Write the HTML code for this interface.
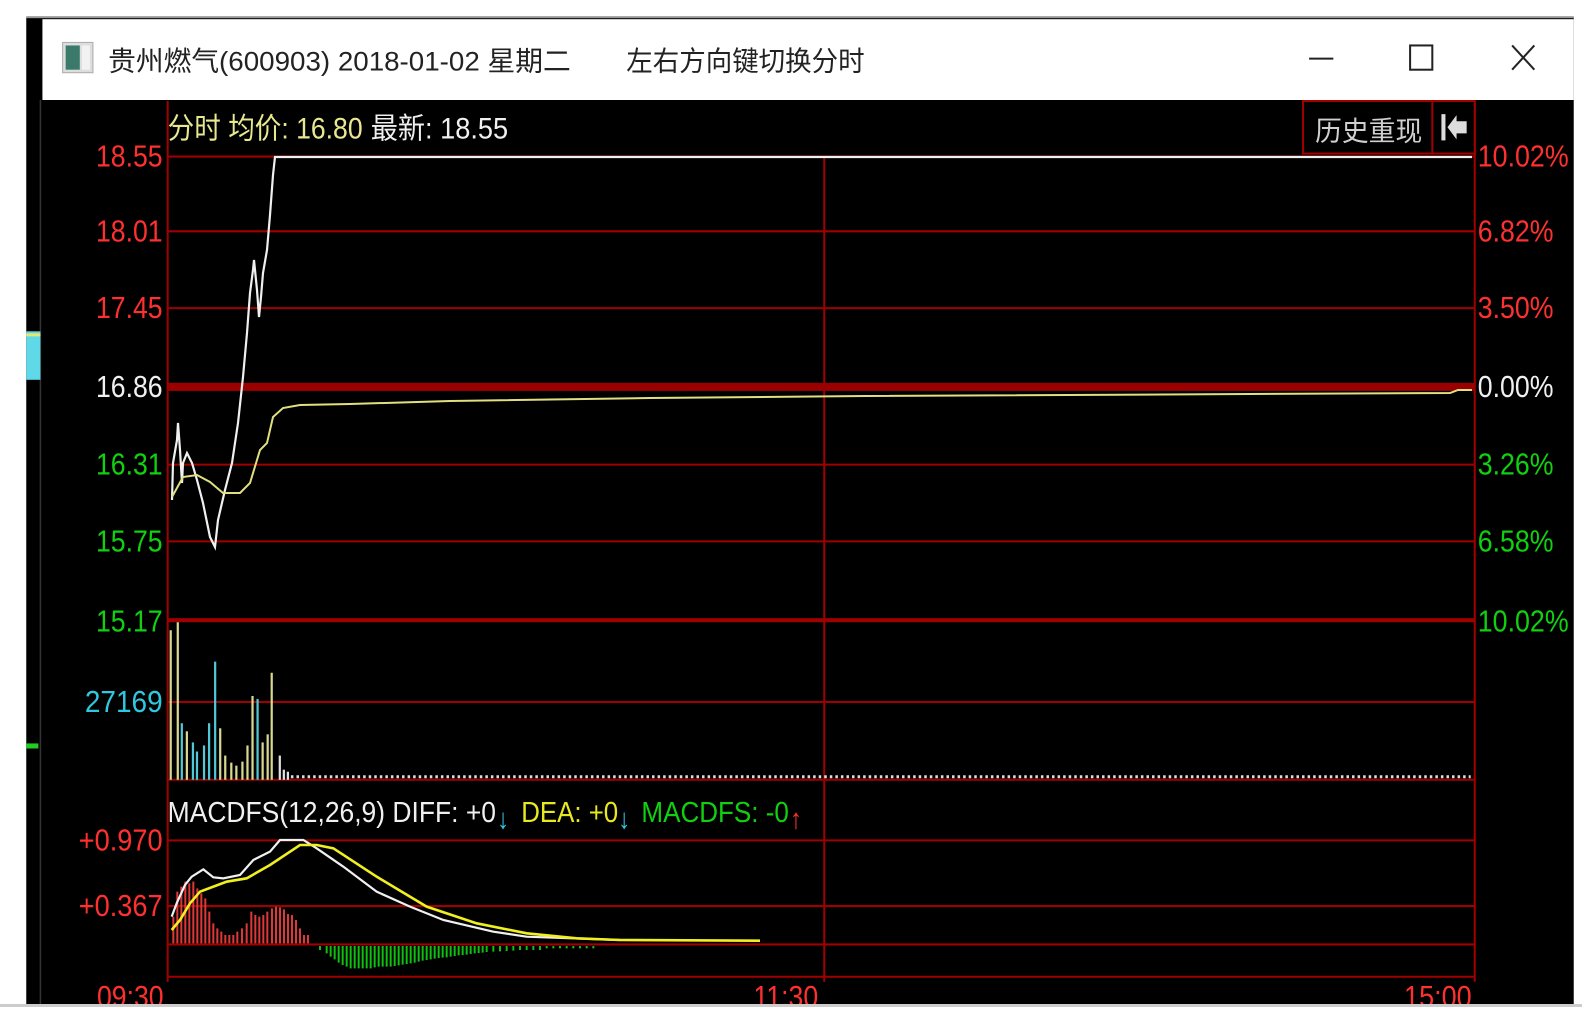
<!DOCTYPE html>
<html><head><meta charset="utf-8"><style>
html,body{margin:0;padding:0;background:#fff;width:1582px;height:1023px;overflow:hidden}
svg{display:block}
text{font-family:"Liberation Sans","Noto Sans CJK SC",sans-serif}
</style></head><body>
<svg width="1582" height="1023" viewBox="0 0 1582 1023" xmlns="http://www.w3.org/2000/svg">
<rect width="1582" height="1023" fill="#fff"/>
<g transform="scale(1.0101)">
 <rect x="26" y="17" width="1532" height="980" fill="#000"/>
 <rect x="26" y="16" width="1532" height="2" fill="#999"/>
 <rect x="42" y="19" width="1516" height="80" fill="#fff"/>
 <line x1="40" y1="99" x2="40" y2="997" stroke="#333" stroke-width="1.5"/>
 <rect x="26" y="328" width="14" height="48" fill="#5fd8e8"/>
 <rect x="26" y="330" width="14" height="3" fill="#e8e870"/>
 <rect x="26" y="736" width="12" height="5" fill="#2c2"/>
 <rect x="62" y="42" width="30" height="30" fill="#ddd" stroke="#aaa"/>
 <rect x="65" y="45" width="14" height="24" fill="#3b7a6a"/>
 <rect x="81" y="45" width="8" height="24" fill="#f2f2f2"/>
 <text x="107" y="70" font-size="27" fill="#222" textLength="458" lengthAdjust="spacingAndGlyphs">贵州燃气(600903) 2018-01-02 星期二</text>
 <text x="620" y="70" font-size="27" fill="#222" textLength="236" lengthAdjust="spacingAndGlyphs">左右方向键切换分时</text>
 <line x1="1296" y1="58" x2="1320" y2="58" stroke="#222" stroke-width="2"/>
 <rect x="1396" y="45" width="22" height="24" fill="none" stroke="#222" stroke-width="2"/>
 <path d="M1497 45 L1519 69 M1519 45 L1497 69" stroke="#222" stroke-width="2"/>

 <g stroke="#a00000" stroke-width="2">
  <line x1="166" y1="155" x2="1460" y2="155"/>
  <line x1="166" y1="229" x2="1460" y2="229"/>
  <line x1="166" y1="305" x2="1460" y2="305"/>
  <line x1="166" y1="460" x2="1460" y2="460"/>
  <line x1="166" y1="536" x2="1460" y2="536"/>
  <line x1="166" y1="695" x2="1460" y2="695"/>
  <line x1="166" y1="772" x2="1460" y2="772"/>
  <line x1="166" y1="832" x2="1460" y2="832"/>
  <line x1="166" y1="897" x2="1460" y2="897"/>
  <line x1="166" y1="935" x2="1460" y2="935"/>
  <line x1="166" y1="967" x2="1460" y2="967"/>
  <line x1="166" y1="100" x2="166" y2="972"/>
  <line x1="1460" y1="100" x2="1460" y2="972"/>
  <line x1="816" y1="155" x2="816" y2="972"/>
 </g>
 <rect x="166" y="379" width="1294" height="8" fill="#9a0000"/>
 <rect x="166" y="612" width="1294" height="4" fill="#a00000"/>
 <rect x="1290" y="100" width="170" height="52" fill="#000" stroke="#a00000" stroke-width="2"/>
 <line x1="1418" y1="100" x2="1418" y2="152" stroke="#a00000" stroke-width="2"/>
 <text x="1302" y="139" font-size="27" fill="#d0d0d0" textLength="106" lengthAdjust="spacingAndGlyphs">历史重现</text>
 <rect x="1427" y="113" width="4" height="26" fill="#ddd"/>
 <polygon points="1433,126 1442,114 1442,120 1452,120 1452,132 1442,132 1442,138" fill="#ddd"/>

 <text x="166" y="137" font-size="29" fill="#e8e890" textLength="193" lengthAdjust="spacingAndGlyphs">分时 均价: 16.80</text>
 <text x="367" y="137" font-size="29" fill="#f0f0f0" textLength="136" lengthAdjust="spacingAndGlyphs">最新: 18.55</text>

 <g font-size="30">
  <text x="95" y="165" fill="#ff3030" textLength="66" lengthAdjust="spacingAndGlyphs">18.55</text>
  <text x="95" y="239" fill="#ff3030" textLength="66" lengthAdjust="spacingAndGlyphs">18.01</text>
  <text x="95" y="315" fill="#ff3030" textLength="66" lengthAdjust="spacingAndGlyphs">17.45</text>
  <text x="95" y="393" fill="#f0f0f0" textLength="66" lengthAdjust="spacingAndGlyphs">16.86</text>
  <text x="95" y="470" fill="#10d010" textLength="66" lengthAdjust="spacingAndGlyphs">16.31</text>
  <text x="95" y="546" fill="#10d010" textLength="66" lengthAdjust="spacingAndGlyphs">15.75</text>
  <text x="95" y="625" fill="#10d010" textLength="66" lengthAdjust="spacingAndGlyphs">15.17</text>
  <text x="84" y="705" fill="#30c8e0" textLength="77" lengthAdjust="spacingAndGlyphs">27169</text>
  <text x="78" y="842" fill="#ff3030" textLength="83" lengthAdjust="spacingAndGlyphs">+0.970</text>
  <text x="78" y="907" fill="#ff3030" textLength="83" lengthAdjust="spacingAndGlyphs">+0.367</text>
 </g>
 <g font-size="30">
  <text x="1463" y="165" fill="#ff3030" textLength="90" lengthAdjust="spacingAndGlyphs">10.02%</text>
  <text x="1463" y="239" fill="#ff3030" textLength="75" lengthAdjust="spacingAndGlyphs">6.82%</text>
  <text x="1463" y="315" fill="#ff3030" textLength="75" lengthAdjust="spacingAndGlyphs">3.50%</text>
  <text x="1463" y="393" fill="#f0f0f0" textLength="75" lengthAdjust="spacingAndGlyphs">0.00%</text>
  <text x="1463" y="470" fill="#10d010" textLength="75" lengthAdjust="spacingAndGlyphs">3.26%</text>
  <text x="1463" y="546" fill="#10d010" textLength="75" lengthAdjust="spacingAndGlyphs">6.58%</text>
  <text x="1463" y="625" fill="#10d010" textLength="90" lengthAdjust="spacingAndGlyphs">10.02%</text>
 </g>
 <g font-size="30" fill="#ff3030">
  <text x="96" y="997" textLength="66" lengthAdjust="spacingAndGlyphs">09:30</text>
  <text x="746" y="997" textLength="64" lengthAdjust="spacingAndGlyphs">11:30</text>
  <text x="1390" y="997" textLength="67" lengthAdjust="spacingAndGlyphs">15:00</text>
 </g>
 <text x="166" y="814" font-size="28" fill="#f0f0f0" textLength="325" lengthAdjust="spacingAndGlyphs">MACDFS(12,26,9) DIFF: +0</text>
 <text x="492" y="820" font-size="28" fill="#30c8e0" textLength="12" lengthAdjust="spacingAndGlyphs">↓</text>
 <text x="516" y="814" font-size="28" fill="#e8e820" textLength="96" lengthAdjust="spacingAndGlyphs">DEA: +0</text>
 <text x="612" y="820" font-size="28" fill="#30c8e0" textLength="12" lengthAdjust="spacingAndGlyphs">↓</text>
 <text x="635" y="814" font-size="28" fill="#10d010" textLength="146" lengthAdjust="spacingAndGlyphs">MACDFS: -0</text>
 <text x="782" y="820" font-size="28" fill="#ff3030" textLength="12" lengthAdjust="spacingAndGlyphs">↑</text>

 <g stroke-width="2.2">
  <line x1="169" y1="772" x2="169" y2="624" stroke="#d8d890"/>
  <line x1="176" y1="772" x2="176" y2="616" stroke="#d8d890"/>
  <line x1="180" y1="772" x2="180" y2="716" stroke="#50c8d8"/>
  <line x1="185" y1="772" x2="185" y2="724" stroke="#d8d890"/>
  <line x1="191" y1="772" x2="191" y2="735" stroke="#50c8d8"/>
  <line x1="195" y1="772" x2="195" y2="744" stroke="#50c8d8"/>
  <line x1="202" y1="772" x2="202" y2="738" stroke="#50c8d8"/>
  <line x1="207" y1="772" x2="207" y2="716" stroke="#50c8d8"/>
  <line x1="213" y1="772" x2="213" y2="655" stroke="#50c8d8"/>
  <line x1="218" y1="772" x2="218" y2="721" stroke="#d8d890"/>
  <line x1="223" y1="772" x2="223" y2="748" stroke="#d8d890"/>
  <line x1="229" y1="772" x2="229" y2="755" stroke="#d8d890"/>
  <line x1="234" y1="772" x2="234" y2="758" stroke="#d8d890"/>
  <line x1="240" y1="772" x2="240" y2="754" stroke="#d8d890"/>
  <line x1="245" y1="772" x2="245" y2="738" stroke="#d8d890"/>
  <line x1="250" y1="772" x2="250" y2="689" stroke="#d8d890"/>
  <line x1="255" y1="772" x2="255" y2="692" stroke="#50c8d8"/>
  <line x1="260" y1="772" x2="260" y2="735" stroke="#d8d890"/>
  <line x1="265" y1="772" x2="265" y2="727" stroke="#d8d890"/>
  <line x1="269" y1="772" x2="269" y2="666" stroke="#d8d890"/>
  <line x1="277" y1="772" x2="277" y2="748" stroke="#e0e0e0"/>
  <line x1="281" y1="772" x2="281" y2="762" stroke="#e0e0e0"/>
  <line x1="285" y1="772" x2="285" y2="764" stroke="#e0e0e0"/>
 </g>
 <line x1="288" y1="769" x2="1456" y2="769" stroke="#ddd" stroke-width="3" stroke-dasharray="2.5,3"/>
</g>

<polyline fill="none" stroke="#f0f0f0" stroke-width="2.2" points="1290,157 1472,157"/>
<polyline fill="none" stroke="#f0f0f0" stroke-width="2.2" points="172,500 173,463 177,440 178,423 180,450 182,483 183,463 187,453 192,463 197,480 203,503 210,537 215,547 218,520 225,490 232,463 238,423 243,377 247,333 250,293 253,270 254,260 257,290 259,317 261,297 263,273 267,250 270,215 273,175 275,157 1290,157"/>
<polyline fill="none" stroke="#e0e080" stroke-width="2" points="172,497 183,477 197,475 210,482 223,493 240,493 250,483 260,450 267,443 273,417 283,408 300,405 350,404 450,401 650,398 865,396 1450,393 1458,390 1472,390"/>

<g transform="translate(160,820) scale(0.33333)">
 <path stroke="#e03838" stroke-width="2" vector-effect="non-scaling-stroke" d="M40 370V290M52 370V215M64 370V200M76 370V185M88 370V190M100 370V185M112 370V205M124 370V220M136 370V235M148 370V275M160 370V310M172 370V325M184 370V335M196 370V345M208 370V345M220 370V345M232 370V335M246 370V325M260 370V310M274 370V275M286 370V285M298 370V290M310 370V285M322 370V275M336 370V265M348 370V260M360 370V262M372 370V268M384 370V282M396 370V285M408 370V300M420 370V325M432 370V345M444 370V345"/>
 <path stroke="#10c010" stroke-width="2" vector-effect="non-scaling-stroke" d="M480 378V390M500 378V400M512 378V410M524 378V418M536 378V428M548 378V435M560 378V440M572 378V445M584 378V445M596 378V445M608 378V445M620 378V445M632 378V445M644 378V442M656 378V440M668 378V440M680 378V440M692 378V440M704 378V438M716 378V436M728 378V434M740 378V432M752 378V430M764 378V428M776 378V425M788 378V422M800 378V420M812 378V418M824 378V416M836 378V414M848 378V413M860 378V412M872 378V410M884 378V408M896 378V406M908 378V405M920 378V404M932 378V402M944 378V400M956 378V399M968 378V398M980 378V396M1000 378V395M1020 378V394M1040 378V393M1060 378V392M1080 378V390M1100 378V390M1120 378V390M1140 378V390M1160 378V385M1180 378V385M1200 378V385M1220 378V385M1240 378V385M1260 378V385M1280 378V385M1300 378V385"/>
 <polyline fill="none" stroke="#f0f0f0" stroke-width="2.2" vector-effect="non-scaling-stroke" points="35,290 50,250 75,195 95,170 130,148 160,172 190,175 240,165 280,120 330,95 360,60 430,60 470,85 550,140 650,215 750,260 850,300 1000,335 1100,350 1380,360"/>
 <polyline fill="none" stroke="#f0f020" stroke-width="2.6" vector-effect="non-scaling-stroke" points="35,330 60,300 90,250 120,215 200,185 260,175 330,135 420,75 470,75 520,85 650,170 800,260 950,310 1100,340 1250,355 1380,360 1800,362"/>
</g>

<rect x="0" y="1005" width="1582" height="18" fill="#fff"/>
<rect x="0" y="1004" width="1582" height="3" fill="#ccc"/>
</svg>
</body></html>
